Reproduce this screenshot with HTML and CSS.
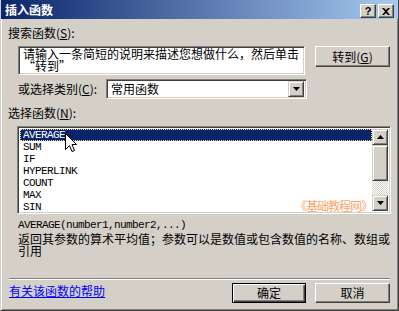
FILE: index.html
```html
<!DOCTYPE html>
<html lang="zh-CN">
<head>
<meta charset="utf-8">
<title>插入函数</title>
<link rel="stylesheet" href="styles.css">
</head>
<body>
<div class="window">
  <div class="titlebar">
    <span class="title">插入函数</span>
    <div class="tbtns">
      <span class="tbtn">?</span>
      <span class="tbtn tclose">
        <svg width="8" height="7" viewBox="0 0 8 7"><path d="M0 0h2l2 2 2-2h2L5 3.5 8 7H6L4 5 2 7H0l3-3.5z" fill="#000"/></svg>
      </span>
    </div>
  </div>
  <div class="content">
    <div class="label l1">搜索函数(<u>S</u>):</div>
    <div class="row search">
      <div class="field textarea">请输入一条简短的说明来描述您想做什么，然后单击“转到”</div>
      <div class="btn go">转到(<u>G</u>)</div>
    </div>
    <div class="row cat">
      <div class="label catlabel">或选择类别(<u>C</u>):</div>
      <div class="field select">
        <span class="seltext">常用函数</span>
        <span class="dropbtn"><svg width="7" height="4" viewBox="0 0 7 4"><path d="M0 0h7L3.5 4z" fill="#000"/></svg></span>
      </div>
    </div>
    <div class="label l3">选择函数(<u>N</u>):</div>
    <div class="field listbox">
      <ul class="items">
        <li class="sel">AVERAGE</li>
        <li>SUM</li>
        <li>IF</li>
        <li>HYPERLINK</li>
        <li>COUNT</li>
        <li>MAX</li>
        <li>SIN</li>
      </ul>
      <div class="vscroll">
        <span class="sbtn"><svg width="7" height="4" viewBox="0 0 7 4"><path d="M3.5 0L7 4H0z" fill="#000"/></svg></span>
        <span class="thumb"></span>
        <span class="track"></span>
        <span class="sbtn"><svg width="7" height="4" viewBox="0 0 7 4"><path d="M0 0h7L3.5 4z" fill="#000"/></svg></span>
      </div>
      <span class="watermark">《基础教程网》</span>
      <svg class="cursor" width="12" height="20" viewBox="0 0 12 20"><path d="M0.5 0.5V16.5L4.5 12.5L7 18.5L9.5 17.5L7 11.5H11.5Z" fill="#fff" stroke="#000" stroke-width="1"/></svg>
    </div>
    <div class="syntax">AVERAGE(number1,number2,...)</div>
    <div class="desc">返回其参数的算术平均值；参数可以是数值或包含数值的名称、数组或引用</div>
    <div class="sep"></div>
    <div class="row footer">
      <a class="help" href="#">有关该函数的帮助</a>
      <div class="btn ok">确定</div>
      <div class="btn cancel">取消</div>
    </div>
  </div>
</div>
</body>
</html>
```
FILE: styles.css
```css
* { box-sizing: border-box; }
html, body { margin: 0; padding: 0; background: #d4d0c8; }
body {
  font-family: "Noto Sans CJK SC", "Liberation Sans", sans-serif;
  font-size: 12px;
  line-height: 12px;
  color: #000;
}
.window {
  width: 399px;
  height: 311px;
  background: #d4d0c8;
  position: relative;
  overflow: hidden;
  border-left: 1px solid #d4d0c8;
  border-right: 1px solid #404040;
  border-bottom: 1px solid #404040;
  box-shadow: inset 1px 0 #fff, inset -1px -1px #808080;
}
.titlebar {
  height: 19px;
  margin-left: -1px;
  background: linear-gradient(to right, #0a246a, #a6caf0);
  display: flex;
  align-items: center;
  padding-left: 5px;
  padding-right: 4px;
}
.title {
  color: #fff;
  font-weight: bold;
  font-size: 12px;
  line-height: 12px;
  flex: 1;
}
.tbtns { display: flex; gap: 2px; margin-top: 3px; }
.tbtn {
  width: 16px;
  height: 14px;
  background: #d4d0c8;
  border: 1px solid;
  border-color: #fff #404040 #404040 #fff;
  box-shadow: inset -1px -1px #808080;
  display: flex;
  align-items: center;
  justify-content: center;
  font-family: "Liberation Sans", sans-serif;
  font-weight: bold;
  font-size: 11px;
  line-height: 11px;
}
.content {
  padding: 0 8px 0 7px;
  display: flex;
  flex-direction: column;
}
.row { display: flex; }
.label { white-space: nowrap; }
.l1 { margin-top: 8px; }
.field {
  background: #fff;
  border: 1px solid;
  border-color: #808080 #fff #fff #808080;
  box-shadow: inset 1px 1px #404040, inset -1px -1px #d4d0c8;
}
.search { margin-top: 7px; align-items: flex-start; }
.textarea {
  margin-left: 10px;
  width: 287px;
  height: 29px;
  padding: 1px 2px 0 4px;
  line-height: 12px;
  overflow: hidden;
}
.btn {
  background: #d4d0c8;
  border: 1px solid;
  border-color: #fff #404040 #404040 #fff;
  box-shadow: inset -1px -1px #808080;
  height: 21px;
  display: flex;
  align-items: center;
  justify-content: center;
}
.go { margin-left: 10px; width: 75px; }
.cat { margin-top: 4px; align-items: center; }
.catlabel { margin-left: 10px; width: 88px; }
.select {
  width: 201px;
  height: 20px;
  display: flex;
  align-items: center;
  padding: 2px;
}
.seltext { flex: 1; padding-left: 2px; }
.dropbtn {
  width: 16px;
  height: 16px;
  background: #d4d0c8;
  border: 1px solid;
  border-color: #d4d0c8 #404040 #404040 #d4d0c8;
  box-shadow: inset 1px 1px #fff, inset -1px -1px #808080;
  display: flex;
  align-items: center;
  justify-content: center;
}
.l3 { margin-top: 8px; }
.listbox {
  margin-top: 7px;
  margin-left: 9px;
  width: 374px;
  height: 88px;
  display: flex;
  padding: 2px;
  position: relative;
}
.items {
  list-style: none;
  margin: 0;
  padding: 0;
  flex: 1;
  font-family: "Liberation Mono", monospace;
  font-size: 11px;
  letter-spacing: -0.6px;
}
.items li { height: 12px; line-height: 12px; padding-left: 3px; }
.items li.sel {
  background: #0a246a;
  color: #fff;
  outline: 1px dotted #f0d890;
  outline-offset: -1px;
}
.vscroll {
  width: 16px;
  display: flex;
  flex-direction: column;
}
.sbtn {
  height: 16px;
  background: #d4d0c8;
  border: 1px solid;
  border-color: #d4d0c8 #404040 #404040 #d4d0c8;
  box-shadow: inset 1px 1px #fff, inset -1px -1px #808080;
  display: flex;
  align-items: center;
  justify-content: center;
}
.thumb {
  height: 36px;
  background: #d4d0c8;
  border: 1px solid;
  border-color: #d4d0c8 #404040 #404040 #d4d0c8;
  box-shadow: inset 1px 1px #fff, inset -1px -1px #808080;
}
.track {
  flex: 1;
  background-color: #fff;
  background-image: conic-gradient(#d4d0c8 25%, #fff 0 50%, #d4d0c8 0 75%, #fff 0);
  background-size: 2px 2px;
}
.watermark {
  position: absolute;
  right: 18px;
  bottom: 1px;
  color: #fba46a;
  font-size: 12px;
  line-height: 12px;
  letter-spacing: -1px;
}
.cursor {
  position: absolute;
  left: 47px;
  top: 6px;
}
.syntax {
  margin-top: 5px;
  margin-left: 10px;
  font-family: "Liberation Mono", monospace;
  font-size: 11px;
  letter-spacing: -0.6px;
  line-height: 12px;
}
.desc {
  margin-top: 2px;
  margin-left: 10px;
  width: 374px;
  line-height: 12px;
}
.sep {
  margin-top: 21px;
  margin-left: 1px;
  height: 2px;
  border-top: 1px solid #808080;
  border-bottom: 1px solid #fff;
}
.footer { margin-top: 3px; align-items: flex-start; }
.help {
  color: #0000ff;
  text-decoration: underline;
  margin-left: 1px;
  margin-top: 2px;
  flex: 1;
}
.ok {
  width: 74px;
  height: 20px;
  border: 1px solid #000;
  box-shadow: inset 1px 1px #fff, inset -1px -1px #404040, inset -2px -2px #808080;
}
.cancel { margin-left: 9px; width: 75px; height: 20px; }
```
